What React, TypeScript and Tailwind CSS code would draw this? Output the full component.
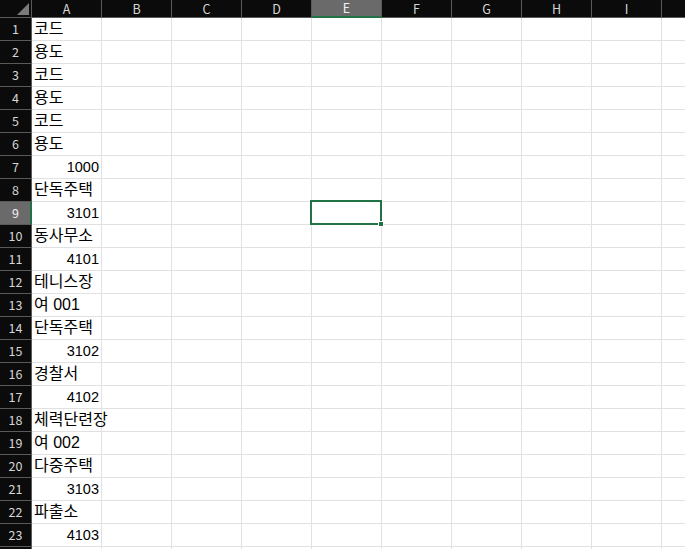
const COLS = ['A', 'B', 'C', 'D', 'E', 'F', 'G', 'H', 'I', ''];

// column A values, one per row; numbers are right-aligned like a spreadsheet
const VALUES: (string | number)[] = [
  '코드',
  '용도',
  '코드',
  '용도',
  '코드',
  '용도',
  1000,
  '단독주택',
  3101,
  '동사무소',
  4101,
  '테니스장',
  '여 001',
  '단독주택',
  3102,
  '경찰서',
  4102,
  '체력단련장',
  '여 002',
  '다중주택',
  3103,
  '파출소',
  4103,
  '',
];

const ACTIVE_COL = 4;
const ACTIVE_ROW = 9;

function ColumnHeader() {
  return (
    <div className="flex h-[18px] shrink-0">
      <div className="relative w-[32px] shrink-0 border-r border-b border-[#5a5a5a] bg-[#0b0b0b]">
        <svg className="absolute right-[2px] bottom-[2px]" width="12" height="12" viewBox="0 0 12 12">
          <path d="M12 0 L12 12 L0 12 Z" fill="#7a7a7a" />
        </svg>
      </div>
      {COLS.map((c, i) =>
        i === ACTIVE_COL ? (
          <div
            key={i}
            className="flex w-[70px] shrink-0 items-center justify-center border-r border-[#5a5a5a] border-b-2 border-b-[#217346] bg-[#6a6a6a] text-[12.5px] leading-[16px] text-[#f0f0f0]"
          >
            {c}
          </div>
        ) : (
          <div
            key={i}
            className="flex w-[70px] shrink-0 items-center justify-center border-r border-b border-[#5a5a5a] bg-[#0b0b0b] text-[12.5px] leading-[16px] text-[#d6d6d6]"
          >
            {c}
          </div>
        ),
      )}
    </div>
  );
}

function Row({ n, value }: { n: number; value: string | number }) {
  const active = n === ACTIVE_ROW;
  const isNum = typeof value === 'number';
  return (
    <div className="flex h-[23px] shrink-0">
      {active ? (
        <div className="flex w-[32px] shrink-0 items-center justify-center border-r-2 border-b border-r-[#217346] border-b-[#5a5a5a] bg-[#6a6a6a] pl-[1px] text-[12.5px] leading-[16px] text-[#f0f0f0]">
          {n}
        </div>
      ) : (
        <div className="flex w-[32px] shrink-0 items-center justify-center border-r border-b border-[#5a5a5a] bg-[#0b0b0b] text-[12.5px] leading-[16px] text-[#d6d6d6]">
          {n}
        </div>
      )}
      <div
        className={
          'flex w-[70px] shrink-0 items-center overflow-visible whitespace-nowrap border-r border-b border-[#e1e1e1] leading-[20px] text-black ' +
          (isNum ? 'justify-end pr-[2px] text-[14.5px]' : 'justify-start pl-[2px] text-[16px]')
        }
        style={{ fontFamily: '"Liberation Sans", "Noto Sans CJK KR", sans-serif' }}
      >
        <span className="relative z-10">{value}</span>
      </div>
      {COLS.slice(1).map((_, i) => (
        <div key={i} className="relative w-[70px] shrink-0 border-r border-b border-[#e1e1e1]">
          {active && i + 1 === ACTIVE_COL && (
            <div className="absolute -top-[2px] -left-[2px] z-20 h-[25px] w-[72px] border-2 border-[#217346]">
              <div className="absolute -right-[4px] -bottom-[4px] h-[6px] w-[6px] border border-white bg-[#217346]" />
            </div>
          )}
        </div>
      ))}
    </div>
  );
}

export default function App() {
  return (
    <div
      className="flex h-[549px] w-[685px] flex-col overflow-hidden bg-white"
      style={{ fontFamily: '"Noto Sans CJK KR", "Noto Sans", sans-serif' }}
    >
      <ColumnHeader />
      {VALUES.map((v, i) => (
        <Row key={i} n={i + 1} value={v} />
      ))}
    </div>
  );
}
